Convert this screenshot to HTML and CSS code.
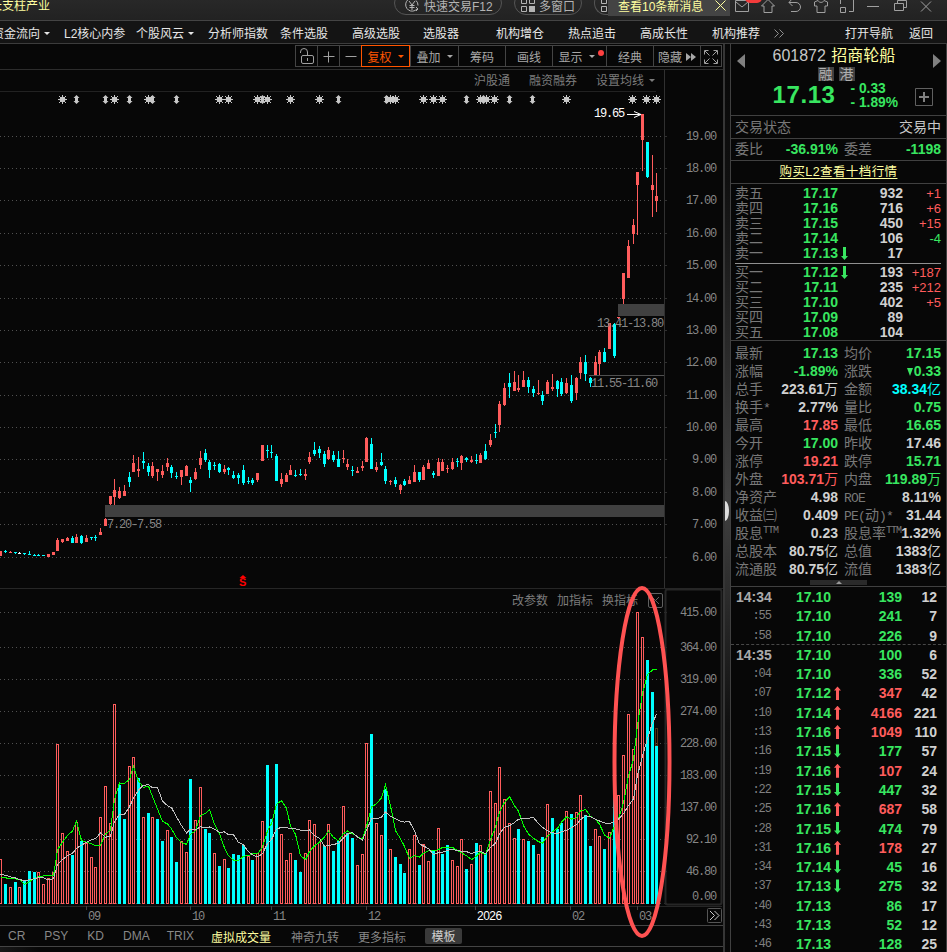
FILE: index.html
```html
<!DOCTYPE html>
<html lang="zh-CN">
<head>
    <meta charset="UTF-8">
    <title>招商轮船 601872</title>
    <link rel="stylesheet" href="styles.css">
</head>
<body>
<div class="titlebar">
    <span class="ticker">长支柱产业</span>
    <div class="pill trade">
        <svg width="16" height="16" viewBox="0 0 16 16"><path d="M10.5 1.6A6.5 6.5 0 1 0 13 12M12 3.5a6.5 6.5 0 0 1 2 5M5 4l3 4 3-4M8 8v5M5.5 8.500h5M5.500 10.500h5M12 10l2 2-2 2"/></svg>
        快速交易F12
    </div>
    <div class="pill windows">
        <svg width="14" height="14" viewBox="0 0 14 14"><path d="M.5.5h5v5h-5zM8.500.5h5v5h-5zM.5 8.500h5v5h-5z"/><path class="solid" d="M8 8h6v6H8z"/></svg>
        多窗口
    </div>
    <div class="pill more">
        <svg width="14" height="14" viewBox="0 0 14 14"><path d="M.5.5h5v5h-5zM8.500.5h5v5h-5zM.5 8.500h5v5h-5zM8.500 8.500h5v5h-5z"/></svg>
    </div>
    <div class="news">查看10条新消息
        <svg width="11" height="11" viewBox="0 0 11 11"><path d="M.5.5l10 10M10.500.5l-10 10"/></svg>
    </div>
    <div class="sys">
        <span class="mail"><svg width="16" height="16" viewBox="0 0 16 16"><path d="M1.500 2.500h13v11h-13zM2 4l6 5 6-5"/></svg><b></b></span>
        <svg width="16" height="16" viewBox="0 0 16 16"><path d="M8 1.500L1.500 8H4v6.500h8V8h2.500z"/></svg>
        <svg width="16" height="16" viewBox="0 0 16 16"><path d="M5 1L2 4.500 5.500 8M2 4.500h7a4.500 4.500 0 0 1 0 9H4"/></svg>
        <svg width="16" height="16" viewBox="0 0 16 16"><path d="M5 2.500L1.500 4v4H4v6.500h8V8h2.500V4L11 2.500C10 5 6 5 5 2.500z"/></svg>
        <svg width="16" height="16" viewBox="0 0 16 16"><path d="M1.500 9.500h5v5h-5zM1.500 6V1.500H5M10 1.500h4.500v12H10"/></svg>
        <svg width="16" height="16" viewBox="0 0 16 16"><path d="M2 8.500h12"/></svg>
        <svg width="16" height="16" viewBox="0 0 16 16"><path d="M2.500 5.500h9v7h-9zM5.500 5V2.500h9v7H12"/></svg>
        <svg width="16" height="16" viewBox="0 0 16 16"><path d="M3 3.500l10 10M13 3.500l-10 10"/></svg>
    </div>
</div>

<div class="menubar">
    <span>资金流向<i class="caret"></i></span>
    <span>L2核心内参</span>
    <span>个股风云<i class="caret"></i></span>
    <span>分析师指数</span>
    <span>条件选股</span>
    <span>高级选股</span>
    <span>选股器</span>
    <span>机构增仓</span>
    <span>热点追击</span>
    <span>高成长性</span>
    <span>机构推荐</span>
    <span><svg class="chevrons" width="10" height="9" viewBox="0 0 10 9"><path d="M.5.5l4 4-4 4M5.500.5l4 4-4 4"/></svg></span>
    <span>打开导航</span>
    <span>返回</span>
</div>

<div class="main">
    <div class="left">
        <div class="toolbar">
            <span class="w22"><svg width="16" height="17" viewBox="0 0 16 17"><rect x="2.500" y="7.500" width="12" height="8" rx="1.500"/><path d="M8.500 10v3M1.500 5V4a3.500 3.500 0 0 1 7 0v3"/></svg></span>
            <span class="w22"><svg width="12" height="12" viewBox="0 0 12 12"><path d="M.5 5.500h11M5.500 .5v11"/></svg></span>
            <span class="w22"><svg width="12" height="12" viewBox="0 0 12 12"><path d="M.5 5.500h11"/></svg></span>
            <span class="w49 active">复权<i class="caret"></i></span>
            <span class="w48">叠加<i class="caret"></i></span>
            <span class="w47">筹码</span>
            <span class="w47">画线</span>
            <span class="w54">显示<i class="caret"></i><em class="dot"></em></span>
            <span class="w47">经典</span>
            <span class="w47">隐藏<svg class="ff" width="10" height="8" viewBox="0 0 10 8"><path d="M0 0l5 4-5 4zM5 0l5 4-5 4z"/></svg></span>
            <span class="w22"><svg width="14" height="14" viewBox="0 0 14 14"><path d="M.5 4.500v-4h4M9.500.5h4v4M13.500 9.500v4h-4M4.500 13.500h-4v-4M1 1l4.500 4.500M13 1L8.500 5.500M13 13L8.500 8.500M1 13l4.500-4.500"/></svg></span>
        </div>
        <div class="tags">
            <span>沪股通</span>
            <span>融资融券</span>
            <span>设置均线<i class="caret"></i></span>
        </div>
        <div class="charts">
            <svg id="chart" width="723" height="855" viewBox="0 70 723 855"></svg>
            <div class="vol-tools">
                <span>改参数</span><span>加指标</span><span>换指标</span>
                <svg width="15" height="15" viewBox="0 0 15 15"><rect x=".5" y=".5" width="14" height="14" rx="1.500"/><path d="M4 4l7 7M11 4l-7 7"/></svg>
            </div>
            <svg class="circle" width="64" height="356" viewBox="0 0 64 356"><ellipse cx="32" cy="178" rx="27.500" ry="174"/></svg>
        </div>
        <div class="tabs">
            <span>CR</span><span>PSY</span><span>KD</span><span class="near">DMA</span><span class="near">TRIX</span>
            <span class="on">虚拟成交量</span><span>神奇九转</span><span>更多指标</span>
            <span class="tpl">模板</span>
        </div>
        <div class="foot"></div>
    </div>

    <div class="splitter"><i></i></div>

    <div class="right">
        <div class="head">
            <i class="tri prev"></i>
            <div class="info">
                <div class="name"><span>601872</span> <b>招商轮船</b></div>
                <div class="badges"><span>融</span><span>港</span></div>
                <div class="quote">
                    <span class="last">17.13</span>
                    <span class="chg"><span>- 0.33</span><span>- 1.89%</span></span>
                </div>
            </div>
            <i class="tri next"></i>
            <svg class="add" width="18" height="18" viewBox="0 0 18 18"><path d="M.5.5h17v17H.5z"/><path class="plus" d="M9 4v10M4 9h10"/></svg>
        </div>
        <div class="state"><span>交易状态</span><span class="w">交易中</span></div>
        <div class="pair wei">
            <span>委比</span><b class="g">-36.91%</b><span>委差</span><b class="g">-1198</b>
        </div>
        <div class="buy-l2"><a>购买L2查看十档行情</a></div>
        <div class="book">
            <div class="lv"><span>卖五</span><b>17.17</b><i></i><b class="n">932</b><em class="r">+1</em></div>
            <div class="lv"><span>卖四</span><b>17.16</b><i></i><b class="n">716</b><em class="r">+6</em></div>
            <div class="lv"><span>卖三</span><b>17.15</b><i></i><b class="n">450</b><em class="r">+15</em></div>
            <div class="lv"><span>卖二</span><b>17.14</b><i></i><b class="n">106</b><em class="g">-4</em></div>
            <div class="lv"><span>卖一</span><b>17.13</b><i class="down"></i><b class="n">17</b><em></em></div>
            <hr>
            <div class="lv"><span>买一</span><b>17.12</b><i class="down"></i><b class="n">193</b><em class="r">+187</em></div>
            <div class="lv"><span>买二</span><b>17.11</b><i></i><b class="n">235</b><em class="r">+212</em></div>
            <div class="lv"><span>买三</span><b>17.10</b><i></i><b class="n">402</b><em class="r">+5</em></div>
            <div class="lv"><span>买四</span><b>17.09</b><i></i><b class="n">89</b><em></em></div>
            <div class="lv"><span>买五</span><b>17.08</b><i></i><b class="n">104</b><em></em></div>
        </div>
        <div class="stats">
            <div class="pair"><span>最新</span><b class="g">17.13</b><span>均价</span><b class="g">17.15</b></div>
            <div class="pair"><span>涨幅</span><b class="g">-1.89%</b><span>涨跌</span><b class="g"><i class="fall"></i>0.33</b></div>
            <div class="pair"><span>总手</span><b>223.61<u>万</u></b><span>金额</span><b class="c">38.34<u>亿</u></b></div>
            <div class="pair"><span>换手<s>*</s></span><b>2.77%</b><span>量比</span><b class="g">0.75</b></div>
            <div class="pair"><span>最高</span><b class="r">17.85</b><span>最低</span><b class="g">16.65</b></div>
            <div class="pair"><span>今开</span><b class="g">17.00</b><span>昨收</span><b>17.46</b></div>
            <div class="pair"><span>涨停</span><b class="r">19.21</b><span>跌停</span><b class="g">15.71</b></div>
            <div class="pair"><span>外盘</span><b class="r">103.71<u>万</u></b><span>内盘</span><b class="g">119.89<u>万</u></b></div>
            <div class="pair"><span>净资产</span><b>4.98</b><span><s>ROE</s></span><b>8.11%</b></div>
            <div class="pair"><span>收益㈢</span><b>0.409</b><span><s>PE(</s>动<s>)*</s></span><b>31.44</b></div>
            <div class="pair"><span>股息<sup>TTM</sup></span><b>0.23</b><span>股息率<sup>TTM</sup></span><b>1.32%</b></div>
            <div class="pair"><span>总股本</span><b>80.75<u>亿</u></b><span>总值</span><b>1383<u>亿</u></b></div>
            <div class="pair"><span>流通股</span><b>80.75<u>亿</u></b><span>流值</span><b>1383<u>亿</u></b></div>
            <div class="grip"><i></i></div>
        </div>
        <div class="ticks" id="ticks"></div>
    </div>
</div>
<script src="chart.js"></script>
</body>
</html>
```
FILE: styles.css
```css
html, body{
    margin: 0;
    padding: 0;
    width: 947px;
    height: 952px;
    overflow: hidden;
    background: #070707;
}

body{
    font-family: "Liberation Sans", "Noto Sans CJK SC", sans-serif;
    font-size: 12px;
    color: #c8c8c8;
    white-space: nowrap;
}

body *{
    box-sizing: border-box;
}

i, em{
    font-style: normal;
}

svg{
    fill: none;
    stroke: #a0a0a0;
    flex: none;
}

.g{ color: #38e660; }
.r{ color: #ff5c5c; }
.c{ color: #00ffff; }
.w{ color: #c8c8c8; }

.caret{
    display: inline-block;
    border: 3px solid transparent;
    border-top-color: currentColor;
    border-bottom: 0;
    margin-left: 4px;
    vertical-align: 3px;
}

/* title bar */
.titlebar{
    display: flex;
    height: 21px;
    overflow: hidden;
    background: linear-gradient(#282828, #222);
    border-bottom: 1px solid #444;
}

.ticker{
    width: 394px;
    margin-left: -10px;
    line-height: 12px;
    color: #ffffa0;
}

.pill{
    display: flex;
    align-items: center;
    height: 24px;
    margin-top: -9px;
    padding: 4px 9px 0;
    gap: 4px;
    border: 1px solid #555;
    border-radius: 12px;
    color: #b4b4b4;
}

.pill svg{ stroke: #b4b4b4; }
.pill .solid{ fill: #b4b4b4; stroke: none; }
.trade{ width: 108px; margin-left: 10px; }
.windows{ width: 68px; margin-left: 12px; padding: 4px 6px 0; }
.more{ width: 14px; margin-left: 12px; padding: 4px 0 0 6px; border-right: 0; border-radius: 12px 0 0 12px; overflow: hidden; }

.news{
    display: flex;
    align-items: center;
    width: 122px;
    height: 16px;
    padding: 0 4px 5px 10px;
    justify-content: space-between;
    background: #444;
    color: #ffffa0;
}

.news svg{ stroke: #ffffa0; }

.sys{
    display: flex;
    gap: 10.300px;
    margin: -2px 0 0 4px;
}

.mail{
    display: flex;
    position: relative;
}

.mail b{
    position: absolute;
    left: 11px;
    top: -5px;
    width: 17px;
    height: 10px;
    border-radius: 5px;
    background: #f33b3b;
}

/* menu */
.menubar{
    display: grid;
    grid-template-columns: 72px 72px 72px 72px 72px 71px 73px 72px 72px 72px 62px 71px 64px auto;
    height: 23px;
    line-height: 27px;
    background: #141414;
    border-bottom: 1px solid #3c3c3c;
    color: #e6e6e6;
}

.menubar span{
    position: relative;
    left: -8px;
}

.chevrons{ stroke: #909090; }

.main{
    display: flex;
    height: 908px;
}

/* chart side */
.left{
    width: 723px;
    display: flex;
    flex-direction: column;
}

.toolbar{
    display: flex;
    justify-content: flex-end;
    height: 26px;
    padding: 1px 1px 2px 0;
    border-bottom: 1px solid #2c2c2c;
    color: #a8a8a8;
}

.toolbar span{
    display: flex;
    align-items: center;
    justify-content: center;
    border: 1px solid #444;
    border-right-width: 0;
    padding-top: 1px;
    position: relative;
}

.toolbar span:last-child{
    border-right-width: 1px;
}

.toolbar .active{
    color: #ff5500;
    border: 1px solid #ff5500;
}

.toolbar .caret{ margin-left: 6px; }
.w22{ width: 22px; }
.w47{ width: 47px; }
.w48{ width: 48px; }
.w49{ width: 49px; }
.toolbar .w54{ width: 54px; padding-right: 6px; }

.dot{
    position: absolute;
    right: 2px;
    top: 4px;
    width: 6px;
    height: 6px;
    border-radius: 50%;
    background: #ff4040;
}

.ff{
    margin-left: 4px;
    fill: #a8a8a8;
    stroke: none;
}

.tags{
    display: flex;
    gap: 19px;
    height: 22px;
    width: 656px;
    padding-left: 474px;
    line-height: 23px;
    border-bottom: 1px solid #222;
    color: #7c7c7c;
}

.tags .caret{ margin-left: 5px; }

.charts{
    position: relative;
    height: 833px;
}

#chart{
    display: block;
    margin-top: -22px;
    stroke: none;
}

#chart text{
    font: 12px "Liberation Mono", monospace;
    letter-spacing: -1.200px;
    fill: #868686;
}

#chart .peak{ fill: #fff; }

#chart .year{
    font: 12px "Liberation Sans", sans-serif;
    letter-spacing: -.5px;
    fill: #fff;
}

#chart .signal{
    font: bold 11px "Liberation Sans", sans-serif;
    fill: #f00;
}

.vol-tools{
    position: absolute;
    left: 512px;
    top: 501px;
    display: flex;
    gap: 9px;
    line-height: 16px;
    color: #7c7c7c;
}

.vol-tools svg{
    stroke: #606060;
    margin-left: 1px;
}

.circle{
    position: absolute;
    left: 610px;
    top: 492px;
    stroke: #ff5252;
    stroke-width: 4px;
    z-index: 2;
}

.tabs{
    display: flex;
    align-items: center;
    height: 22px;
    padding-left: 8px;
    border-top: 1px solid #444;
    border-bottom: 1px solid #444;
    color: #888;
}

.tabs span{ margin-right: 19px; }
.tabs .near{ margin-right: 17px; }
.tabs .on{ color: #ffffa0; margin-right: 20px; }

.tabs .tpl{
    width: 37px;
    height: 16px;
    line-height: 18px;
    text-align: center;
    background: #3a3a3a;
    border-radius: 2px;
    color: #d0d0d0;
}

.foot{
    flex: 1;
    background: linear-gradient(90deg, #181818, #070707 40px);
}

.splitter{
    display: flex;
    align-items: center;
    width: 8px;
    border-left: 2px solid #363636;
    border-right: 1px solid #404040;
    background: linear-gradient(#080808, #101010 15%, #404040 50%, #101010 75%, #080808);
}

.splitter i{
    width: 4px;
    height: 20px;
    margin-top: 26px;
    background: #ddd;
    border-radius: 0 4px 4px 0 / 0 10px 10px 0;
}

/* quote side */
.right{
    width: 216px;
    border-right: 1px solid #404040;
    font-size: 14px;
    color: #c8c8c8;
}

.head{
    display: flex;
    justify-content: space-between;
    position: relative;
    height: 72px;
    padding: 0 5px 0 6px;
    border-bottom: 1px solid #404040;
}

.tri{
    width: 0;
    height: 0;
    margin-top: 10px;
    border: 7.500px solid transparent;
}

.prev{ border-left: 0; border-right: 8px solid #808080; }
.next{ border-right: 0; border-left: 8px solid #808080; }

.info{
    width: 130px;
    margin-left: 3px;
}

.name{
    font-size: 16px;
    line-height: 24px;
    margin-left: -3px;
    word-spacing: 1px;
}

.name b{
    font-weight: normal;
    color: #ffffa0;
}

.badges{
    display: flex;
    gap: 5px;
    margin: -1px 0 0 42px;
}

.badges span{
    width: 16px;
    height: 14px;
    line-height: 14px;
    text-align: center;
    background: #404040;
    color: #b0b0b0;
}

.quote{
    display: flex;
    font-weight: bold;
    color: #38e660;
}

.last{
    width: 78px;
    margin-left: -3px;
    font-size: 24px;
    line-height: 27px;
    letter-spacing: .6px;
}

.chg{
    display: flex;
    flex-direction: column;
    padding-top: 1px;
    line-height: 14px;
    font-size: 13.800px;
}

.add{
    position: absolute;
    left: 184px;
    top: 44px;
    stroke: #606060;
}

.plus{
    stroke: #808080;
    stroke-width: 2;
}

.state, .pair{
    color: #787878;
}

.state{
    display: flex;
    justify-content: space-between;
    height: 23px;
    line-height: 22px;
    padding: 0 5px 0 4px;
    border-bottom: 1px solid #404040;
}

.pair{
    display: grid;
    grid-template-columns: 28px 75px 28px 67px;
    padding-left: 4px;
    height: 18px;
    line-height: 18px;
}

.pair > :nth-child(3){ padding-left: 6px; }
.pair > b:last-child{ width: 75px; }

.pair b{
    font-weight: bold;
    text-align: right;
}

.pair b:not([class]){ color: #d0d0d0; }

.pair u{
    text-decoration: none;
    font-weight: normal;
}

.pair s{
    text-decoration: none;
    font: 13px "Liberation Mono", monospace;
    letter-spacing: -.8px;
}

.pair sup{
    font: 10px "Liberation Mono", monospace;
    letter-spacing: -1px;
    vertical-align: 5px;
    line-height: 0;
}

.wei{
    height: 22px;
    line-height: 21px;
    border-bottom: 1px solid #404040;
}

.buy-l2{
    height: 23px;
    line-height: 22px;
    font-size: 12.500px;
    letter-spacing: .4px;
    text-align: center;
    border-bottom: 1px solid #404040;
    color: #ffffa0;
}

.buy-l2 a{
    text-decoration: underline;
    text-underline-offset: 2px;
}

.book{
    height: 157px;
    padding: 2px 5px 0 4px;
    border-bottom: 1px solid #404040;
}

.lv{
    display: grid;
    grid-template-columns: 40px 63px 11px 54px 38px;
    height: 15px;
    line-height: 15px;
    text-align: right;
}

.lv span{
    text-align: left;
    color: #787878;
}

.lv b{ color: #38e660; font-weight: bold; }
.lv .n{ color: #d0d0d0; }
.lv em{ font-size: 13px; }

.book hr{
    height: 1px;
    margin: 2px 0 1px;
    border: 0;
    background: #909090;
}

/* price direction arrows */
.up, .down{
    width: 7px;
    height: 13px;
    margin: 1px 0 0 3px;
    background: #38e660;
    clip-path: polygon(2px 0, 5px 0, 5px 9px, 7px 9px, 3.500px 13px, 0 9px, 2px 9px);
}

.up{
    background: #ff5c5c;
    clip-path: polygon(2px 14px, 5px 14px, 5px 4px, 7px 4px, 3.500px 0, 0 4px, 2px 4px);
}

.stats{
    height: 246px;
    padding-top: 3px;
    border-bottom: 1px solid #404040;
}

.fall{
    display: inline-block;
    border: 3.500px solid transparent;
    border-top: 8px solid #38e660;
    border-bottom: 0;
    margin-right: 1px;
}

.grip{
    width: 57px;
    height: 5px;
    margin: 2px 0 0 79px;
    padding-top: 1px;
    background: #2a2a2a;
}

.grip i{
    display: block;
    width: 0;
    margin: 0 auto;
    border: 3px solid transparent;
    border-top: 0;
    border-bottom-color: #999;
}

.tick{
    display: grid;
    grid-template-columns: 35px 60px 11px 60px 35px;
    height: 19.300px;
    line-height: 20px;
    padding-left: 5px;
    text-align: right;
    font-weight: bold;
    color: #d0d0d0;
}

.tick span:first-child{ color: #aaa; }

.tick .sec{
    font: 12px/20px "Liberation Mono", monospace;
    letter-spacing: -1px;
}

.tick span.sec:first-child{ color: #808080; }

.tick .up, .tick .down{
    height: 14px;
    margin-top: 3px;
}

.minute{
    margin-top: -1px;
    height: 20.300px;
    border-top: 1px dashed #484848;
}
```
FILE: chart.js
```js
const svg = document.getElementById("chart");
const RED = "#ff5c5c", CYAN = "#00ffff";

// colour, high, low, body top, body bottom
const candles = [
["r",551,556,551,556],["c",550,553,551,552],["r",551,553,552,553],["c",552,554,552,553],["w",552,554,553,554],
["c",553,555,553,554],["c",551,555,554,555],["c",554,556,555,556],["c",554,556,555,556],["c",555,556,555,556],
["r",554,557,554,557],["r",552,555,552,555],["r",538,551,540,551],["r",539,543,539,542],["r",537,541,538,541],
["c",536,543,538,543],["r",534,543,537,543],["c",535,544,536,543],["r",535,542,538,542],["c",537,540,537,538],
["c",535,541,537,538],["r",528,535,532,535],["r",518,526,519,526],["r",496,505,496,504],["r",479,505,490,497],
["r",487,499,491,498],["r",485,496,491,496],["c",472,487,477,482],["r",455,472,463,472],["r",457,477,469,471],
["c",452,469,461,463],["c",463,476,466,472],["r",462,478,466,476],["r",469,481,469,472],["r",465,478,471,475],
["r",458,471,463,467],["c",465,478,467,473],["c",472,479,476,477],["r",470,485,470,477],["r",465,476,466,476],
["c",477,492,480,483],["r",468,480,472,479],["r",451,469,458,465],["c",449,462,453,460],["c",460,478,462,470],
["c",462,470,465,466],["c",463,473,464,472],["r",465,474,469,472],["c",467,475,468,470],["c",471,479,475,478],
["c",473,484,475,478],["c",465,485,470,483],["c",477,484,481,482],["c",478,485,480,483],["r",473,482,473,480],
["r",445,461,445,461],["c",445,458,450,451],["c",445,458,452,453],["c",454,481,456,481],["r",473,487,479,484],
["r",473,482,475,482],["r",465,475,470,475],["c",470,477,475,476],["c",469,476,474,475],["r",469,480,474,476],
["r",452,464,457,462],["c",442,456,450,454],["c",446,458,449,453],["c",451,467,454,464],["r",447,460,450,459],
["c",451,462,455,460],["c",451,467,459,467],["r",450,463,458,459],["r",459,470,464,467],["c",466,476,470,471],
["r",467,473,471,473],["r",461,471,466,468],["r",437,462,438,462],["c",438,469,444,469],["r",462,472,467,470],
["c",453,466,462,465],["c",466,484,469,481],["r",480,485,481,482],["c",477,487,480,484],["r",484,494,485,490],
["c",479,486,481,485],["r",476,484,480,484],["r",465,482,472,482],["c",472,482,472,480],["r",465,480,467,480],
["r",460,469,463,469],["c",471,478,473,475],["r",458,476,462,476],["r",459,471,462,471],["r",465,473,468,469],
["r",458,470,462,469],["c",458,467,461,462],["r",455,470,456,463],["c",457,462,458,460],["r",456,463,460,462],
["c",454,464,460,461],["r",453,463,455,463],["c",444,460,451,459],["r",434,447,440,445],["c",424,438,432,433],
["r",401,432,404,425],["r",383,406,388,405],["c",373,398,383,387],["r",371,391,382,391],["r",375,392,388,390],
["r",371,387,380,387],["c",377,393,380,387],["c",386,397,389,393],["r",380,395,393,394],["c",391,405,395,401],
["r",380,394,382,394],["r",374,391,387,389],["c",380,397,381,389],["c",378,396,382,394],["r",378,394,383,393],
["c",375,403,385,401],["r",377,400,378,393],["r",357,379,362,373],["c",355,381,362,374],["c",377,387,378,383],
["r",356,375,362,375],["r",350,375,352,364],["c",348,362,352,362],["r",323,349,323,349],["c",323,358,324,356],
["r",317,319,317,318],["r",273,304,273,299],["r",240,278,246,278],["r",219,244,225,234],["r",172,235,172,185],
["r",114,171,114,140],["c",142,178,142,177],["r",155,217,185,190],["r",173,212,196,201]
];

// top of every volume bar
const volumes = [
859,884,887,882,887,881,871,872,872,884,878,872,744,833,851,855,822,841,843,857,
867,817,786,823,704,785,819,766,757,778,817,813,817,819,841,830,837,862,841,852,
779,820,787,829,833,853,866,859,868,854,855,845,856,860,853,821,765,819,764,834,
860,853,860,872,853,820,824,842,846,824,851,841,806,833,838,865,854,743,734,823,
835,789,849,857,864,873,849,835,865,844,861,850,828,854,845,860,866,839,869,864,
843,845,853,791,803,767,799,823,838,829,839,841,845,854,837,804,818,829,823,811,
814,812,795,815,846,829,836,849,832,783,795,755,714,749,612,637,660,692,746
];

// close against the previous close, ten bars a group
const volColors = [
"rcrcrcccrr","rrrrrcrcrr","rrrrrccrrc","rcrccrccrr","crrccrcrcc",
"ccrcrrcccr","rrccrrrrcr","ccrccrrrcr","rcrcccrrcr","rcrccrrrcr",
"crcrrrrrrc","rccrcrcccr","crrccrrcrc","rrrrrrccc"
].join("");

// volumes before the visible range, needed by the averages
const before = [871,871,871,871,871,880,882,882,882];
const BASE = 904;

const barX = i => Math.ceil(i * 4.754 - 0.2);

let out = "";

function rect(x, y, w, h, fill){
    out += `<rect x="${x}" y="${y}" width="${w}" height="${h}" fill="${fill}"/>`;
}

function text(x, y, str, cls = "", anchor = "start"){
    out += `<text x="${x}" y="${y}" class="${cls}" text-anchor="${anchor}">${str}</text>`;
}

function dotted(y){
    out += `<path d="M0 ${y + 0.5}H664" stroke="#505050" stroke-dasharray="1 3" shape-rendering="crispEdges"/>`;
    rect(664, y, 3, 1, "#303030");
}

// price grid
[136,168,200,233,265,298,330,362,395,427,459,492,524,557].forEach((y, i) => {
    dotted(y);
    text(716, y + 4, (19 - i) + ".00", "", "end");
});

// volume grid
const volLabels = ["415.00","364.00","319.00","274.00","228.00","183.00","137.00","92.10","46.80","0.00"];
[612,647,679,711,743,775,807,839,871,903].forEach((y, i) => {
    dotted(y);
    text(716, i == 9 ? 900 : y + 4, volLabels[i], "", "end");
});

// frames
rect(664, 70, 1, 519, "#303030");
rect(0, 588, 723, 1, "#262626");
rect(0, 906, 722, 1, "#262626");
out += '<rect x="665.500" y="589.500" width="56" height="315" rx="2" fill="none" stroke="#262626" stroke-width="2"/>';

// dividend / event marks
function star(x){
    out += `<circle cx="${x + .5}" cy="99.500" r="2.800" fill="#c8c8c8"/><path d="M${x + .5} 95v9M${x - 4} 99.500h9M${x - 3} 96l7 7M${x + 4} 96l-7 7" stroke="#c8c8c8"/>`;
}
function arrows(x){
    out += `<path d="M${x + .5} 95l3 3h-1.500v3h1.500l-3 3-3-3h1.500v-3h-1.500z" fill="#c8c8c8"/>`;
}
[62,114,148,219,228,257,267,290,319,390,395,423,433,442,480,486,494,566,632,646,656].forEach(star);
[76,105,129,152,176,262,338,386,466,483,509,532].forEach(arrows);

// gaps
rect(105, 505, 559, 12, "#404040");
rect(618, 304, 46, 12, "#404040");
rect(589, 375, 75, 1, "#505050");

candles.forEach(([c, high, low, top, bottom], i) => {
    const x = barX(i);
    const color = c == "r" ? RED : c == "c" ? CYAN : "#ffffff";
    rect(x, high, 1, low - high, color);
    rect(x - 1, top, 3, bottom - top, color);
});

text(107, 528, "7.20-7.58");
text(597, 327, "13.41-13.80");
text(591, 387, "11.55-11.60");
text(594, 117, "19.65", "peak");
out += '<path d="M627 114.500h14M634 111.500l7 3-7 3" stroke="#fff" fill="none"/>';
text(239, 586, "S", "signal");
out += '<path d="M243 575l3.500 3h-7z" fill="#f00"/>';

volumes.forEach((top, i) => {
    const x = barX(i);
    if (volColors[i] == "c"){
        rect(x - 1, top, 3, BASE - top, CYAN);
    } else {
        out += `<rect x="${x - .5}" y="${top + .5}" width="2" height="${BASE - top - 1}" fill="#070707" stroke="${RED}"/>`;
    }
});
out += '<rect x="655.500" y="728.500" width="2" height="17" fill="none" stroke="#a06020" stroke-dasharray="1 1"/>';

function average(n, color){
    const all = before.concat(volumes);
    const pts = volumes.map((v, i) => {
        const part = all.slice(i + 10 - n, i + 10);
        return barX(i) + .5 + "," + (part.reduce((a, b) => a + b) / n).toFixed(1);
    });
    out += `<polyline points="${pts.join(" ")}" fill="none" stroke="${color}" shape-rendering="crispEdges"/>`;
}
average(5, "#00ff00");
average(10, "#c0c0c0");

// time axis
[[86,"09"],[190,"10"],[271,"11"],[366,"12"],[475,"2026"],[570,"02"],[637,"03"]].forEach(([x, s]) => {
    rect(x, 906, 1, 4, "#404040");
    text(x + 2, 920, s, s == "2026" ? "year" : "");
});
out += '<rect x="707.500" y="908.500" width="14" height="14" rx="1" fill="none" stroke="#555"/><path d="M710 911l4.500 4.500-4.500 4.500M714.500 911l4.500 4.500-4.500 4.500" stroke="#c8c8c8" fill="none"/>';

svg.innerHTML = out;

// time, price, direction, volume, side, count
const ticks = [
["14:34","17.10","",139,"g",12],
[":55","17.10","",241,"g",7],
[":58","17.10","",226,"g",9],
["14:35","17.10","",100,"g",6],
[":04","17.10","",336,"g",52],
[":07","17.12","up",347,"r",42],
[":10","17.14","up",4166,"r",221],
[":13","17.16","up",1049,"r",110],
[":16","17.15","down",177,"g",57],
[":19","17.16","up",107,"r",24],
[":22","17.15","down",447,"g",32],
[":25","17.16","up",687,"r",58],
[":28","17.15","down",474,"g",79],
[":31","17.16","up",178,"r",27],
[":34","17.14","down",45,"g",16],
[":37","17.13","down",275,"g",32],
[":40","17.13","",86,"g",17],
[":43","17.13","",52,"g",12],
[":46","17.13","",128,"g",25]
];
document.getElementById("ticks").innerHTML = ticks.map(([t, p, dir, v, side, n], i) =>
    `<div class="tick${i == 3 ? " minute" : ""}"><span class="${t.length < 4 ? "sec" : ""}">${t}</span><span class="g">${p}</span><i class="${dir}"></i><span class="${side}">${v}</span><span>${n}</span></div>`
).join("");
```
